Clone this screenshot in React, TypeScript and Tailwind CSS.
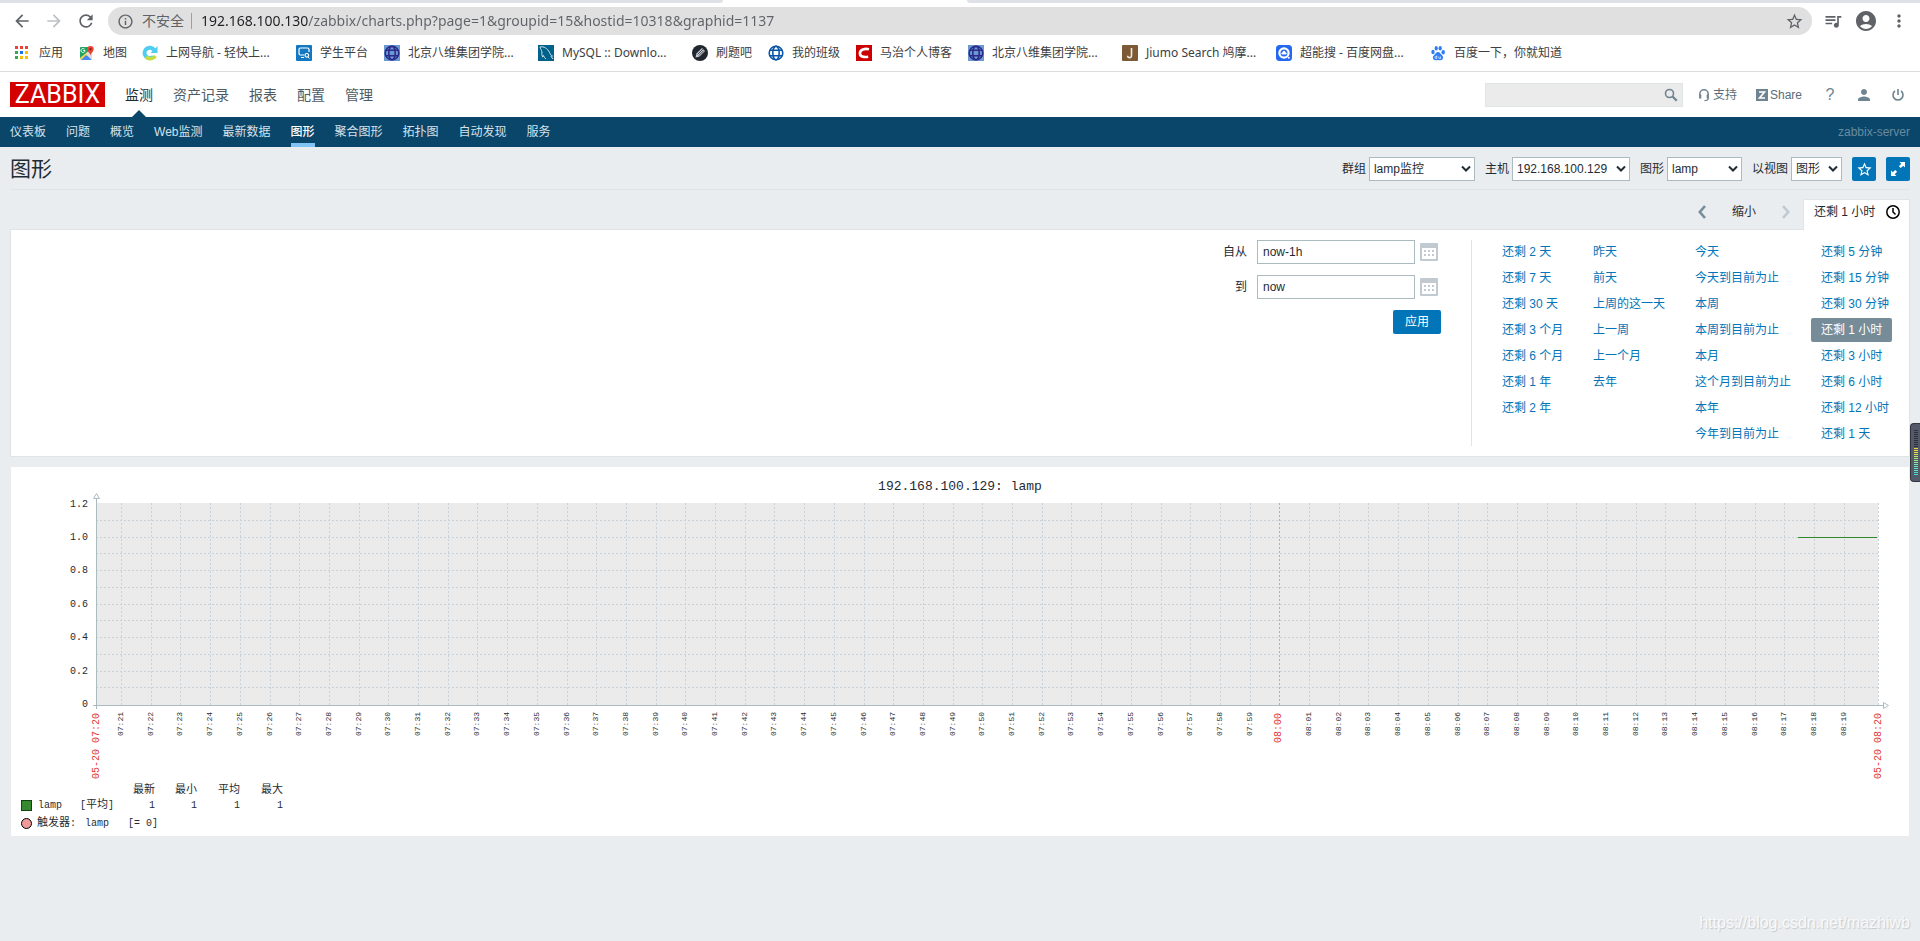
import { useState } from "react";
import type { ReactNode } from "react";
import {
  MdAccountCircle,
  MdArrowBack,
  MdArrowForward,
  MdInfoOutline,
  MdMoreVert,
  MdPerson,
  MdQueueMusic,
  MdRefresh,
  MdStarBorder,
} from "react-icons/md";

/* ---------- bookmark icons ---------- */

function AppsIcon() {
  const colors = ["#ea4335", "#ea4335", "#ea4335", "#34a853", "#1a73e8", "#fbbc04", "#34a853", "#fbbc04", "#fbbc04"];
  return (
    <svg width="14" height="14" viewBox="0 0 14 14">
      {colors.map((c, i) => (
        <rect key={i} x={(i % 3) * 5} y={Math.floor(i / 3) * 5} width="3" height="3" fill={c} />
      ))}
    </svg>
  );
}

function MapsIcon() {
  return (
    <svg width="16" height="16" viewBox="0 0 16 16">
      <rect x="1" y="2" width="12" height="13" rx="1" fill="#e8eaed" />
      <path d="M1 3a1 1 0 0 1 1-1h9v3L1 14z" fill="#1fa463" />
      <path d="M2 15l5-6 6 6z" fill="#4a89f3" />
      <path d="M1 13L12 4l1 2-9 9H2z" fill="#fdd34c" />
      <path d="M7 9l6 6V9l-3-3z" fill="#dadce0" />
      <path d="M2 15l5-5 5 5z" fill="#4a89f3" />
      <path d="M11.500 1a3.200 3.200 0 0 1 3.200 3.200c0 2-2 3-3.200 6-1.200-3-3.200-4-3.200-6A3.200 3.200 0 0 1 11.500 1z" fill="#ea4335" />
      <circle cx="11.500" cy="4.200" r="1.100" fill="#7d1f1a" />
      <path d="M6 5.500H4.200M6 5.500a2 2 0 1 1-.6-1.400" stroke="#fff" strokeWidth="1" fill="none" />
    </svg>
  );
}

function NavSiteIcon() {
  return (
    <svg width="16" height="16" viewBox="0 0 16 16" fill="none">
      <path d="M11.500 11.500A5.200 5.200 0 1 1 12 5" stroke="#4fcdf0" strokeWidth="4" />
      <path d="M4 11.800c2.500 2.800 7 2.600 9.500-.8" stroke="#c5dc3c" strokeWidth="3.600" />
      <path d="M15.500 1v7H8.500z" fill="#4fcdf0" />
    </svg>
  );
}

function StudentIcon() {
  return (
    <svg width="16" height="16" viewBox="0 0 16 16" fill="none">
      <rect width="16" height="16" rx="1" fill="#1278bf" />
      <path d="M8 10H4.500A1.500 1.500 0 0 1 3 8.500v-4A1.500 1.500 0 0 1 4.500 3h7A1.500 1.500 0 0 1 13 4.500V7M5 12.500h3" stroke="#fff" strokeWidth="1.200" />
      <circle cx="10.800" cy="10.300" r="1.800" stroke="#fff" strokeWidth="1.200" />
      <path d="M12 12l1.500 1.500" stroke="#fff" />
    </svg>
  );
}

function GlobeIcon({ bg, color }: { bg?: string; color: string }) {
  return (
    <svg width="16" height="16" viewBox="0 0 16 16" fill="none" stroke={color} strokeWidth="1.600">
      {bg && <rect width="16" height="16" fill={bg} stroke="none" />}
      <circle cx="8" cy="8" r="6.800" />
      <ellipse cx="8" cy="8" rx="3.200" ry="6.800" />
      <path d="M2 5.300h12M2 10.700h12" />
    </svg>
  );
}

function MysqlIcon() {
  return (
    <svg width="16" height="16" viewBox="0 0 16 16" fill="none">
      <rect width="16" height="16" fill="#00618a" />
      <path d="M2 2c4-1 7.500 1.500 9.500 5.500 1 2 1.500 3 3 3.500-1 0-1.500.3-1.500.3l2 2.700" stroke="#d5e5ec" />
      <path d="M2 2c.3 2 1.500 2.800 1.800 4.500.3 2-.3 4.500 1 5.500.8-.3.700-1.500.7-1.500.8 1.500 1 2.500 2.500 3.500" stroke="#d5e5ec" />
    </svg>
  );
}

function PenIcon() {
  return (
    <svg width="16" height="16" viewBox="0 0 16 16">
      <circle cx="8" cy="8" r="8" fill="#22262f" />
      <path d="M3.500 12.500l1-4L10 3l3 3-5.500 5.500z" fill="#c9ced6" />
      <path d="M5.500 9.500L11 4M6.800 10.600l5-5" stroke="#22262f" strokeWidth=".8" />
    </svg>
  );
}

function CsdnIcon() {
  return (
    <svg width="16" height="16" viewBox="0 0 16 16" fill="none">
      <rect width="16" height="16" fill="#cc0000" />
      <path d="M13 4.200C8.500 3.200 4.300 4.500 3.900 8c-.3 3.500 3.600 4.500 8.300 3.800" stroke="#fff" strokeWidth="2.600" />
    </svg>
  );
}

function JiumoIcon() {
  return (
    <svg width="16" height="16" viewBox="0 0 16 16" fill="none">
      <rect width="16" height="16" rx="1" fill="#7d5a36" />
      <path d="M9.500 3v7.500a2 2 0 0 1-4 .3" stroke="#f3e9dc" strokeWidth="1.600" />
    </svg>
  );
}

function PanSearchIcon() {
  return (
    <svg width="16" height="16" viewBox="0 0 16 16" fill="none">
      <rect width="16" height="16" rx="3.500" fill="#2468f2" />
      <circle cx="8" cy="8" r="4.600" stroke="#fff" strokeWidth="2.200" />
      <circle cx="8" cy="7.300" r="1.500" fill="#fff" />
      <path d="M6.300 9.500a1 1 0 0 1 0-2h3.400a1 1 0 0 1 0 2z" fill="#fff" />
      <circle cx="12.800" cy="12.800" r="1" fill="#fff" />
    </svg>
  );
}

function BaiduIcon() {
  return (
    <svg width="16" height="16" viewBox="0 0 16 16" fill="#2f7df6">
      <ellipse cx="3" cy="7" rx="1.700" ry="2.200" />
      <ellipse cx="6.200" cy="3.200" rx="1.600" ry="2.300" />
      <ellipse cx="10.200" cy="3.300" rx="1.600" ry="2.300" />
      <ellipse cx="13.200" cy="7.300" rx="1.700" ry="2.200" />
      <path d="M8 7c2 0 2.500 2 4 3.300 2 1.700 1 5-1.500 5-1.200 0-1.500-.3-2.500-.3s-1.500.3-2.500.3c-2.700 0-3.500-3.300-1.500-5C5.500 9 6 7 8 7z" />
      <path d="M6.800 10.500v3H6a1 1 0 0 1 0-2h.8M8.800 11.500v1.300c0 .5.300.7.700.7h1v-2" stroke="#fff" strokeWidth=".7" fill="none" />
    </svg>
  );
}

/* ---------- page icons ---------- */

function SearchIcon() {
  return (
    <svg width="14" height="14" viewBox="0 0 14 14" fill="none" stroke="#6e8490">
      <circle cx="5.500" cy="5.500" r="4" strokeWidth="1.600" />
      <path d="M8.500 8.500l4.300 4.300" strokeWidth="2.200" />
    </svg>
  );
}

function SupportIcon() {
  return (
    <svg width="12" height="14" viewBox="0 0 12 14" fill="none" stroke="#6e8490">
      <path d="M1.800 8V6a4.200 4.200 0 0 1 8.400 0v2" strokeWidth="1.500" />
      <path d="M2.200 6.500v4M9.800 6.500v4" strokeWidth="2.200" />
      <path d="M10.300 10c0 2-.8 2.700-3.800 2.700" strokeWidth="1.200" />
    </svg>
  );
}

function ShareIcon() {
  return (
    <svg width="12" height="12" viewBox="0 0 12 12" fill="none">
      <rect width="12" height="12" fill="#6e8490" />
      <path d="M3 3h5.500L3.500 9H9" stroke="#fff" strokeWidth="1.600" />
    </svg>
  );
}

function PowerIcon() {
  return (
    <svg width="14" height="14" viewBox="0 0 14 14" fill="none" stroke="#6e8490" strokeWidth="1.600">
      <path d="M4 3a5 5 0 1 0 6 0M7 1v6" />
    </svg>
  );
}

function ExpandIcon() {
  return (
    <svg width="16" height="16" viewBox="0 0 16 16" fill="#fff">
      <path d="M9.500 1H15v5.500l-1.800-1.800-2.400 2.400-1.900-1.900 2.400-2.400zM6.500 15H1V9.500l1.800 1.800 2.400-2.400 1.900 1.900-2.400 2.400z" />
    </svg>
  );
}

function CalendarIcon() {
  return (
    <svg width="18" height="18" viewBox="0 0 18 18" fill="#c0cad0">
      <path d="M1 0h16a1 1 0 0 1 1 1v16a1 1 0 0 1-1 1H1a1 1 0 0 1-1-1V1a1 1 0 0 1 1-1zm1 5v11h14V5z" fillRule="evenodd" />
      {[4, 8, 12].map((x) => (
        <g key={x}>
          <rect x={x} y="7" width="2" height="2" />
          <rect x={x} y="11" width="2" height="2" />
        </g>
      ))}
    </svg>
  );
}

function ClockIcon() {
  return (
    <svg width="14" height="14" viewBox="0 0 14 14" fill="none" stroke="#000" strokeWidth="1.500">
      <circle cx="7" cy="7" r="6.200" />
      <path d="M7 3v4l2.500 2.500" />
    </svg>
  );
}

function Chevron({ dir, color }: { dir: "left" | "right" | "down"; color: string }) {
  if (dir === "down") {
    return (
      <svg width="10" height="8" viewBox="0 0 10 8" fill="none" stroke={color} strokeWidth="2">
        <path d="M1 1.500l4 4 4-4" />
      </svg>
    );
  }
  return (
    <svg width="8" height="14" viewBox="0 0 8 14" fill="none" stroke={color} strokeWidth="2.600">
      <path d={dir === "left" ? "M7 1L1.800 7 7 13" : "M1 1l5.200 6L1 13"} />
    </svg>
  );
}

/* ---------- browser chrome ---------- */

const bookmarks: { label: string; icon: ReactNode; width: string }[] = [
  { label: "应用", icon: <AppsIcon />, width: "w-[40px]" },
  { label: "地图", icon: <MapsIcon />, width: "w-[39px]" },
  { label: "上网导航 - 轻快上...", icon: <NavSiteIcon />, width: "w-[130px]" },
  { label: "学生平台", icon: <StudentIcon />, width: "w-[64px]" },
  { label: "北京八维集团学院...", icon: <GlobeIcon bg="#6a9ad0" color="#2b2a8c" />, width: "w-[130px]" },
  { label: "MySQL :: Downlo...", icon: <MysqlIcon />, width: "w-[130px]" },
  { label: "刷题吧", icon: <PenIcon />, width: "w-[52px]" },
  { label: "我的班级", icon: <GlobeIcon color="#0b55a8" />, width: "w-[64px]" },
  { label: "马治个人博客", icon: <CsdnIcon />, width: "w-[88px]" },
  { label: "北京八维集团学院...", icon: <GlobeIcon bg="#6a9ad0" color="#2b2a8c" />, width: "w-[130px]" },
  { label: "Jiumo Search 鸠摩...", icon: <JiumoIcon />, width: "w-[130px]" },
  { label: "超能搜 - 百度网盘...", icon: <PanSearchIcon />, width: "w-[130px]" },
  { label: "百度一下，你就知道", icon: <BaiduIcon />, width: "w-[130px]" },
];

function BrowserBar() {
  return (
    <div className="bg-white font-['Noto_Sans','Noto_Sans_CJK_SC',sans-serif]">
      {/* Tab strip */}
      <div className="flex h-[3px]">
        <div className="w-[723px] rounded-br bg-[#dee1e6]" />
        <div className="w-[244px]" />
        <div className="flex-1 rounded-bl bg-[#dee1e6]" />
      </div>

      {/* Toolbar */}
      <div className="flex items-center gap-[11px] pt-1 pr-[11px] pl-3 text-[#5f6368]">
        <div className="flex gap-3 pr-px">
          <button aria-label="back"><MdArrowBack size={20} /></button>
          <button aria-label="forward" className="text-[#bdc1c6]"><MdArrowForward size={20} /></button>
          <button aria-label="reload"><MdRefresh size={20} /></button>
        </div>
        <div className="flex h-7 flex-1 items-center rounded-full bg-[#e0e0e0] pr-2 pl-[9px] text-sm">
          <MdInfoOutline size={17} />
          <span className="ml-2">不安全</span>
          <span className="mx-[7px] h-4 w-px bg-[#9aa0a6]" />
          {/* host part is darker than the path */}
          <input
            aria-label="address"
            className="ml-[2px] flex-1 bg-[linear-gradient(to_right,#202124_107px,#5f6368_107px)] bg-clip-text text-transparent outline-none"
            defaultValue="192.168.100.130/zabbix/charts.php?page=1&groupid=15&hostid=10318&graphid=1137"
          />
          <button aria-label="star"><MdStarBorder size={19} /></button>
        </div>
        <button aria-label="media"><MdQueueMusic size={20} /></button>
        <button aria-label="profile"><MdAccountCircle size={24} /></button>
        <button aria-label="menu"><MdMoreVert size={20} /></button>
      </div>

      {/* Bookmarks */}
      <div className="flex h-[37px] items-center gap-6 border-b border-[#dadce0] pl-[15px] text-xs whitespace-nowrap text-[#3c4043]">
        {bookmarks.map((b, i) => (
          <a key={i} href="#" className={`flex shrink-0 items-center gap-2 ${b.width}`}>
            <span className="flex w-4 shrink-0">{b.icon}</span>
            {b.label}
          </a>
        ))}
      </div>
    </div>
  );
}

/* ---------- zabbix header ---------- */

const mainMenu = ["监测", "资产记录", "报表", "配置", "管理"];
const subMenu = ["仪表板", "问题", "概览", "Web监测", "最新数据", "图形", "聚合图形", "拓扑图", "自动发现", "服务"];

function Header() {
  return (
    <header>
      <div className="flex h-[45px] items-center justify-between bg-white pr-[15px] pl-[10px]">
        <div className="flex items-center gap-5">
          <a href="#" className="flex h-[25px] w-[95px] items-center justify-center bg-[#d40000] font-['Roboto',sans-serif] text-[25px] text-white">
            ZABBIX
          </a>
          <nav className="flex gap-5 text-sm text-[#4f5b63]">
            {mainMenu.map((m, i) => (
              <a key={m} href="#" className={i === 0 ? "relative text-[#1f2c33]" : ""}>
                {m}
                {i === 0 && (
                  <span className="absolute top-[25px] left-[6px] border-x-8 border-b-8 border-x-transparent border-b-[#0a466a]" />
                )}
              </a>
            ))}
          </nav>
        </div>
        <div className="flex items-center text-xs text-[#5a6d78]">
          <div className="mr-[15px] flex h-6 w-[198px] items-center border border-[#dfe4e7] bg-[#ebebeb]">
            <input aria-label="search" className="h-full min-w-0 flex-1 bg-transparent px-1 outline-none" />
            <button aria-label="find" className="mr-1"><SearchIcon /></button>
          </div>
          <a href="#" className="mr-[19px] flex items-center gap-[3px]"><SupportIcon />支持</a>
          <a href="#" className="mr-[23px] flex items-center gap-[2px]"><ShareIcon />Share</a>
          <a href="#" className="mr-5 w-[10px] text-center text-base text-[#6e8490]">?</a>
          <a href="#" aria-label="profile" className="mr-[18px] text-[#6e8490]"><MdPerson size={18} /></a>
          <a href="#" aria-label="sign out"><PowerIcon /></a>
        </div>
      </div>

      <div className="flex h-[30px] items-center justify-between bg-[#0a466a] px-[10px] text-xs text-[#d5e2ea]">
        <nav className="flex h-full gap-5">
          {subMenu.map((m) => (
            <a
              key={m}
              href="#"
              className={
                m === "图形"
                  ? "flex items-center border-y-4 border-t-transparent border-b-[#7fc4f3] font-medium text-white"
                  : "flex items-center"
              }
            >
              {m}
            </a>
          ))}
        </nav>
        <span className="text-[#678ba0]">zabbix-server</span>
      </div>
    </header>
  );
}

/* ---------- filters ---------- */

const filters = [
  { id: "group", label: "群组", value: "lamp监控", width: "w-[106px]" },
  { id: "host", label: "主机", value: "192.168.100.129", width: "w-[118px]" },
  { id: "graph", label: "图形", value: "lamp", width: "w-[75px]" },
  { id: "view", label: "以视图", value: "图形", width: "w-[51px]" },
];

function TitleBar() {
  return (
    <div className="mx-[10px] flex items-center justify-between border-b border-[#dfe4e7] pt-[10px] pb-2">
      <h1 className="text-[21px] leading-6">图形</h1>
      <div className="flex items-center gap-[10px]">
        {filters.map((f) => (
          <div key={f.id} className="flex items-center gap-[3px]">
            <label htmlFor={f.id}>{f.label}</label>
            <div className={`relative ${f.width}`}>
              <select id={f.id} className="h-6 w-full appearance-none border border-[#acbbc2] bg-white pl-1">
                <option>{f.value}</option>
              </select>
              <span className="pointer-events-none absolute top-2 right-1">
                <Chevron dir="down" color="#1f2c33" />
              </span>
            </div>
          </div>
        ))}
        <button aria-label="favourite" className="flex size-6 items-center justify-center rounded-xs bg-[#0275b8] text-white">
          <MdStarBorder size={17} />
        </button>
        <button aria-label="fullscreen" className="flex size-6 items-center justify-center rounded-xs bg-[#0275b8]">
          <ExpandIcon />
        </button>
      </div>
    </div>
  );
}

const ranges = [
  { width: "w-[91px]", items: ["还剩 2 天", "还剩 7 天", "还剩 30 天", "还剩 3 个月", "还剩 6 个月", "还剩 1 年", "还剩 2 年"] },
  { width: "w-[102px]", items: ["昨天", "前天", "上周的这一天", "上一周", "上一个月", "去年"] },
  { width: "w-[126px]", items: ["今天", "今天到目前为止", "本周", "本周到目前为止", "本月", "这个月到目前为止", "本年", "今年到目前为止"] },
  { width: "w-[88px]", items: ["还剩 5 分钟", "还剩 15 分钟", "还剩 30 分钟", "还剩 1 小时", "还剩 3 小时", "还剩 6 小时", "还剩 12 小时", "还剩 1 天"] },
];

function TimeFilter() {
  const [selected, setSelected] = useState("还剩 1 小时");

  return (
    <section className="mx-[10px] pt-[9px]">
      <div className="flex h-[30px] items-center justify-end">
        <button aria-label="previous" className="pb-1"><Chevron dir="left" color="#768d99" /></button>
        <button className="mx-[26px] pb-1">缩小</button>
        <button aria-label="next" className="mr-[13px] pb-1" disabled><Chevron dir="right" color="#c0cad0" /></button>
        <button className="relative -mb-px flex h-[31px] w-[107px] items-center justify-between border border-b-0 border-[#dfe4e7] bg-white pr-[9px] pb-[6px] pl-[10px] whitespace-nowrap">
          {selected}
          <ClockIcon />
        </button>
      </div>

      <div className="flex justify-end border border-[#dfe4e7] bg-white py-[10px]">
        <form className="flex flex-col gap-[11px] pr-[30px]" onSubmit={(e) => e.preventDefault()}>
          {[
            { id: "from", label: "自从", value: "now-1h" },
            { id: "to", label: "到", value: "now" },
          ].map((f) => (
            <div key={f.id} className="flex items-center justify-end pr-[3px]">
              <label htmlFor={f.id} className="mr-[10px]">{f.label}</label>
              <input id={f.id} defaultValue={f.value} className="mr-[5px] h-6 w-[158px] border border-[#acbbc2] px-[5px]" />
              <button type="button" aria-label="calendar"><CalendarIcon /></button>
            </div>
          ))}
          <button className="h-6 w-12 self-end rounded-xs bg-[#0275b8] text-white">应用</button>
        </form>
        <div className="flex border-l border-[#dfe4e7] pr-[10px] pl-5 whitespace-nowrap">
          {ranges.map((col, i) => (
            <div key={i} className={`flex flex-col items-start gap-[2px] ${col.width}`}>
              {col.items.map((r) => (
                <a
                  key={r}
                  href="#"
                  onClick={() => setSelected(r)}
                  className={
                    r === selected
                      ? "h-6 rounded-xs bg-[#768d99] px-[10px] leading-6 text-white"
                      : "h-6 px-[10px] leading-6 text-[#0275b8]"
                  }
                >
                  {r}
                </a>
              ))}
            </div>
          ))}
        </div>
      </div>
    </section>
  );
}

/* ---------- graph ---------- */

const LEFT = 85;
const RIGHT = 1867;
const TOP = 36;
const BOTTOM = 238;
const gridRows = [53, 70, 86, 103, 120, 137, 153, 170, 187, 204, 220];
const yLabels = ["1.2", "1.0", "0.8", "0.6", "0.4", "0.2", "0"];

const minutes = Array.from({ length: 59 }, (_, i) => {
  const m = 21 + i;
  const hour = m < 60 ? "07" : "08";
  return { label: `${hour}:${String(m % 60).padStart(2, "0")}`, x: Math.round(110 + i * 29.7), hour: m === 60 };
});

function Graph() {
  return (
    <svg viewBox="0 0 1898 316" className="block w-full font-['Liberation_Mono',monospace]">
      <text x="949" y="23" textAnchor="middle" fontSize="13" fill="#1f2c33">192.168.100.129: lamp</text>
      <rect x={LEFT} y={TOP} width={RIGHT - LEFT} height={BOTTOM - TOP} fill="#ebebeb" />

      <g stroke="#c8d2d8" strokeDasharray="2 2" shapeRendering="crispEdges">
        {gridRows.map((y) => (
          <line key={y} x1={LEFT} x2={RIGHT} y1={y + 0.5} y2={y + 0.5} />
        ))}
        {minutes.map((m) => (
          <line key={m.label} x1={m.x + 0.5} x2={m.x + 0.5} y1={TOP} y2={BOTTOM} stroke={m.hour ? "#a3b4bd" : "#c8d2d8"} />
        ))}
        <line x1={RIGHT + 0.5} x2={RIGHT + 0.5} y1={TOP} y2={BOTTOM} />
      </g>

      {/* axes */}
      <g stroke="#acbbc2" fill="#fff">
        <path d={`M${LEFT + 0.5} 31V242M82 ${BOTTOM + 0.5}H1872`} shapeRendering="crispEdges" />
        <path d="M82.500 31.500h6l-3-5z" />
        <path d="M1872.500 235.500v6l5-3z" />
      </g>

      <line x1="1787" x2="1866" y1="70.500" y2="70.500" stroke="#2f8a2c" shapeRendering="crispEdges" />

      <g fontSize="10" fill="#1f2c33" textAnchor="end">
        {yLabels.map((l, i) => (
          <text key={l} x="77" y={Math.floor(40 + i * 33.4)}>{l}</text>
        ))}
      </g>

      {minutes.map((m) => (
        <text
          key={m.label}
          transform={`translate(${m.x + 2} ${m.hour ? 246 : 245}) rotate(-90)`}
          textAnchor="end"
          fontSize={m.hour ? 10 : 8}
          fill={m.hour ? "#e33734" : "#1f2c33"}
        >
          {m.label}
        </text>
      ))}
      <g textAnchor="end" fontSize="10" fill="#e33734">
        <text transform="translate(88 246) rotate(-90)">05-20 07:20</text>
        <text transform="translate(1870 246) rotate(-90)">05-20 08:20</text>
      </g>
    </svg>
  );
}

function GraphPanel() {
  return (
    <section className="mx-[11px] mt-[10px] bg-white pb-[5px]">
      <Graph />
      <div className="pl-[10px] font-['Liberation_Mono','Noto_Sans_CJK_SC',monospace] text-[10px] leading-[15px]">
        <table className="w-[262px] table-fixed text-right">
          <thead>
            <tr className="h-[15px] text-[11px]">
              <td className="w-[59px]" />
              <td className="w-[35px]" />
              <th className="w-[40px] font-normal">最新</th>
              <th className="w-[42px] font-normal">最小</th>
              <th className="w-[43px] font-normal">平均</th>
              <th className="w-[43px] font-normal">最大</th>
            </tr>
          </thead>
          <tbody>
            <tr className="h-[15px]">
              <td>
                <div className="flex items-center gap-[6px]">
                  <span className="size-[11px] border border-[#153f14] bg-[#37892f]" />
                  lamp
                </div>
              </td>
              <td className="text-left">[<span className="text-[11px]">平均</span>]</td>
              <td>1</td>
              <td>1</td>
              <td>1</td>
              <td>1</td>
            </tr>
          </tbody>
        </table>
        <div className="mt-[3px] flex h-[15px] items-center">
          <span className="mr-[5px] size-[11px] rounded-full border border-black bg-[#ee9a9a]" />
          <span className="w-[48px]"><span className="text-[11px]">触发器</span>:</span>
          <span className="w-[43px]">lamp</span>
          <span>[= 0]</span>
        </div>
      </div>
    </section>
  );
}

/* Level meter docked at the window edge */
function LevelMeter() {
  const colors = ["#f0d840", "#f0e040", "#e4e84a", "#d0e858", "#bce868", "#a8ea78", "#98ec88", "#88ee98", "#78eea8", "#6ceab4", "#60e6bc", "#58e2c4", "#50dec8", "#48dacc"];
  return (
    <div className="absolute top-[423px] right-0 flex h-[59px] w-[10px] flex-col items-center gap-px rounded-l border border-r-0 border-[#33363f] bg-[#545a69] pt-[6px]">
      {Array.from({ length: 9 }, (_, i) => (
        <span key={i} className="h-px w-1 bg-[#2d3039]" />
      ))}
      {colors.map((c) => (
        <span key={c} className="h-px w-1" style={{ backgroundColor: c }} />
      ))}
    </div>
  );
}

export default function App() {
  return (
    <div className="relative min-h-screen bg-[#e9edf0] font-['Liberation_Sans','Noto_Sans_CJK_SC',sans-serif] text-xs text-[#1f2c33]">
      <BrowserBar />
      <Header />
      <main>
        <TitleBar />
        <TimeFilter />
        <GraphPanel />
      </main>
      <LevelMeter />
      <div className="absolute right-[10px] bottom-[6px] text-base text-[#f8fafb] [text-shadow:1px_1px_1px_#c4c8cb]">
        https://blog.csdn.net/mazhiwb
      </div>
    </div>
  );
}
